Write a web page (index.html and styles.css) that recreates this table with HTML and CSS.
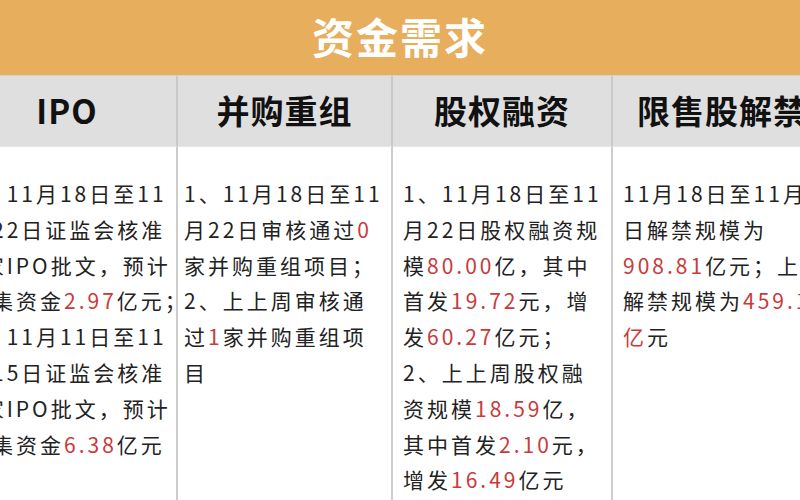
FILE: index.html
```html
<!DOCTYPE html>
<html lang="zh-CN">
<head>
<meta charset="utf-8">
<title>资金需求</title>
<link rel="stylesheet" href="styles.css">
</head>
<body>
<div class="page">
  <div class="title">资金需求</div>
  <div class="table">
    <div class="th c1">IPO</div>
    <div class="th c2">并购重组</div>
    <div class="th c3">股权融资</div>
    <div class="th c4">限售股解禁</div>

    <div class="td c1">1、11月18日至11<br>月22日证监会核准<br>0家IPO批文，预计<br>募集资金<span class="num">2.97</span>亿元；<br>2、11月11日至11<br>月15日证监会核准<br>0家IPO批文，预计<br>募集资金<span class="num">6.38</span>亿元</div>
    <div class="td c2">1、11月18日至11<br>月22日审核通过<span class="num">0</span><br>家并购重组项目；<br>2、上上周审核通<br>过<span class="num">1</span>家并购重组项<br>目</div>
    <div class="td c3">1、11月18日至11<br>月22日股权融资规<br>模<span class="num">80.00</span>亿，其中<br>首发<span class="num">19.72</span>元，增<br>发<span class="num">60.27</span>亿元；<br>2、上上周股权融<br>资规模<span class="num">18.59</span>亿，<br>其中首发<span class="num">2.10</span>元，<br>增发<span class="num">16.49</span>亿元</div>
    <div class="td c4">11月18日至11月22<br>日解禁规模为<br><span class="num">908.81</span>亿元；上周<br>解禁规模为<span class="num">459.19</span><br><span class="num">亿</span>元</div>
  </div>
</div>
</body>
</html>
```

FILE: styles.css
```css
html, body {
  margin: 0;
  padding: 0;
  background: #ffffff;
  overflow: hidden;
}

.page {
  width: 800px;
  height: 500px;
  overflow: hidden;
  font-family: "Noto Sans CJK SC", "Noto Sans", sans-serif;
}

.title {
  height: 75px;
  background: #e7ae5d;
  color: #ffffff;
  font-size: 42px;
  font-weight: 700;
  letter-spacing: 2px;
  line-height: 72px;
  text-align: center;
}

.table {
  display: grid;
  grid-template-columns: 220px 215px 220px 220px;
  grid-template-rows: 71px 1fr;
  margin-left: -42px;
  height: 425px;
}

.th {
  background: #dfdfdf;
  border-top: 1px solid #d2d2d2;
  border-right: 2px solid #c9c9c9;
  font-size: 33px;
  font-weight: 700;
  color: #111111;
  text-align: center;
  line-height: 68px;
  letter-spacing: 1px;
  white-space: nowrap;
}

.td {
  border-right: 2px solid #cdcdcd;
  border-top: 1px solid #e6e6e6;
  padding: 29px 0 0 10px;
  font-size: 21px;
  line-height: 35.8px;
  letter-spacing: 3px;
  color: #222222;
  white-space: nowrap;
  overflow: hidden;
}

.td.c2 {
  padding-left: 6px;
}

.num {
  color: #c93a3a;
}
```
